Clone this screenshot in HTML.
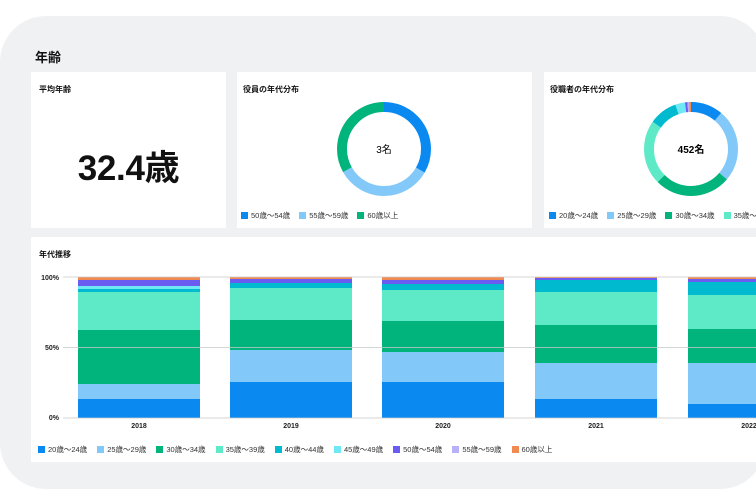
<!DOCTYPE html>
<html><head><meta charset="utf-8"><style>
*{margin:0;padding:0;box-sizing:border-box}
body{width:756px;height:504px;overflow:hidden;background:#fff;font-family:"Liberation Sans","Noto Sans CJK JP",sans-serif;color:#111;position:relative}
.panel{position:absolute;left:0;top:16px;width:766px;height:473px;background:#f0f1f3;border-radius:46px}
.card{position:absolute;background:#fff}
.t{position:absolute;font-size:8px;font-weight:bold}
.lg{position:absolute;font-size:7.5px;color:#333;white-space:nowrap;display:flex;gap:9px;align-items:center}
.lg span{display:flex;align-items:center}
.lg i{display:inline-block;width:7px;height:7px;margin-right:3px}
</style></head><body>
<div class="panel"></div>
<div style="position:absolute;left:35px;top:47px;font-size:13px;font-weight:bold">年齢</div>

<div class="card" style="left:31px;top:72px;width:195px;height:156px">
<div class="t" style="left:8px;top:12px">平均年齢</div>
<div style="position:absolute;left:0;width:195px;top:68px;text-align:center;font-size:35px;font-weight:bold;letter-spacing:-0.3px">32.4歳</div>
</div>

<div class="card" style="left:237px;top:72px;width:295px;height:156px">
<div class="t" style="left:6px;top:12px">役員の年代分布</div>
<svg style="position:absolute;left:0;top:0" width="295" height="156">
<g transform="rotate(-90 147 77)" fill="none" stroke-width="10">
<circle cx="147" cy="77" r="42" stroke="#0a8af0" stroke-dasharray="88 300"/>
<circle cx="147" cy="77" r="42" stroke="#82c8f8" stroke-dasharray="88 300" stroke-dashoffset="-88"/>
<circle cx="147" cy="77" r="42" stroke="#00b47c" stroke-dasharray="88 300" stroke-dashoffset="-176"/>
</g>
<text x="147" y="81" text-anchor="middle" font-size="10" font-family="Liberation Sans,Noto Sans CJK JP,sans-serif">3名</text>
</svg>
<div class="lg" style="left:4px;top:138px"><span><i style="background:#0a8af0"></i>50歳〜54歳</span><span><i style="background:#82c8f8"></i>55歳〜59歳</span><span><i style="background:#00b47c"></i>60歳以上</span></div>
</div>

<div class="card" style="left:544px;top:72px;width:220px;height:156px">
<div class="t" style="left:6px;top:12px">役職者の年代分布</div>
<svg style="position:absolute;left:0;top:0" width="220" height="156">
<g transform="rotate(-90 147 77)" fill="none" stroke-width="10">
<circle cx="147" cy="77" r="42" stroke="#0a8af0" stroke-dasharray="29.3 300"/>
<circle cx="147" cy="77" r="42" stroke="#82c8f8" stroke-dasharray="66 300" stroke-dashoffset="-29.3"/>
<circle cx="147" cy="77" r="42" stroke="#00b47c" stroke-dasharray="69.6 300" stroke-dashoffset="-95.3"/>
<circle cx="147" cy="77" r="42" stroke="#5eeac6" stroke-dasharray="58.6 300" stroke-dashoffset="-164.9"/>
<circle cx="147" cy="77" r="42" stroke="#00bad0" stroke-dasharray="25.7 300" stroke-dashoffset="-223.5"/>
<circle cx="147" cy="77" r="42" stroke="#6ee8f4" stroke-dasharray="8.8 300" stroke-dashoffset="-249.2"/>
<circle cx="147" cy="77" r="42" stroke="#6a5cf0" stroke-dasharray="2.2 300" stroke-dashoffset="-258"/>
<circle cx="147" cy="77" r="42" stroke="#b8b0f8" stroke-dasharray="1.5 300" stroke-dashoffset="-260.2"/>
<circle cx="147" cy="77" r="42" stroke="#f08a50" stroke-dasharray="2.2 300" stroke-dashoffset="-261.7"/>
</g>
<text x="147" y="81" text-anchor="middle" font-size="10" font-weight="bold" font-family="Liberation Sans,Noto Sans CJK JP,sans-serif">452名</text>
</svg>
<div class="lg" style="left:5px;top:138px"><span><i style="background:#0a8af0"></i>20歳〜24歳</span><span><i style="background:#82c8f8"></i>25歳〜29歳</span><span><i style="background:#00b47c"></i>30歳〜34歳</span><span><i style="background:#5eeac6"></i>35歳〜39歳</span></div>
</div>

<div class="card" style="left:31px;top:237px;width:740px;height:225px">
<div class="t" style="left:8px;top:12px">年代推移</div>
</div>
<svg style="position:absolute;left:0;top:0" width="756" height="504" font-family="Liberation Sans,Noto Sans CJK JP,sans-serif">
<g font-size="7" font-weight="bold" text-anchor="end" fill="#222">
<text x="59" y="280">100%</text><text x="59" y="350">50%</text><text x="59" y="420">0%</text>
</g>
<g>
<rect x="78" y="399" width="122" height="19" fill="#0a8af0"/>
<rect x="78" y="384" width="122" height="15" fill="#82c8f8"/>
<rect x="78" y="330" width="122" height="54" fill="#00b47c"/>
<rect x="78" y="292" width="122" height="38" fill="#5eeac6"/>
<rect x="78" y="289" width="122" height="3" fill="#00bad0"/>
<rect x="78" y="286" width="122" height="3" fill="#6ee8f4"/>
<rect x="78" y="280" width="122" height="6" fill="#6a5cf0"/>
<rect x="78" y="277" width="122" height="3" fill="#f08a50"/>
<rect x="230" y="382" width="122" height="36" fill="#0a8af0"/>
<rect x="230" y="350" width="122" height="32" fill="#82c8f8"/>
<rect x="230" y="320" width="122" height="30" fill="#00b47c"/>
<rect x="230" y="288" width="122" height="32" fill="#5eeac6"/>
<rect x="230" y="283" width="122" height="5" fill="#00bad0"/>
<rect x="230" y="279" width="122" height="4" fill="#6a5cf0"/>
<rect x="230" y="277" width="122" height="2" fill="#f08a50"/>
<rect x="382" y="382" width="122" height="36" fill="#0a8af0"/>
<rect x="382" y="352" width="122" height="30" fill="#82c8f8"/>
<rect x="382" y="321" width="122" height="31" fill="#00b47c"/>
<rect x="382" y="290" width="122" height="31" fill="#5eeac6"/>
<rect x="382" y="284" width="122" height="6" fill="#00bad0"/>
<rect x="382" y="280" width="122" height="4" fill="#6a5cf0"/>
<rect x="382" y="277" width="122" height="3" fill="#f08a50"/>
<rect x="535" y="399" width="122" height="19" fill="#0a8af0"/>
<rect x="535" y="363" width="122" height="36" fill="#82c8f8"/>
<rect x="535" y="325" width="122" height="38" fill="#00b47c"/>
<rect x="535" y="292" width="122" height="33" fill="#5eeac6"/>
<rect x="535" y="280" width="122" height="12" fill="#00bad0"/>
<rect x="535" y="278" width="122" height="2" fill="#6a5cf0"/>
<rect x="535" y="277" width="122" height="1" fill="#f08a50"/>
<rect x="688" y="404" width="122" height="14" fill="#0a8af0"/>
<rect x="688" y="363" width="122" height="41" fill="#82c8f8"/>
<rect x="688" y="329" width="122" height="34" fill="#00b47c"/>
<rect x="688" y="295" width="122" height="34" fill="#5eeac6"/>
<rect x="688" y="282" width="122" height="13" fill="#00bad0"/>
<rect x="688" y="279" width="122" height="3" fill="#6a5cf0"/>
<rect x="688" y="277" width="122" height="2" fill="#f08a50"/>
</g>
<g stroke="#c8c8c8" stroke-width="0.8">
<line x1="63" y1="277" x2="756" y2="277"/><line x1="63" y1="347.5" x2="756" y2="347.5"/><line x1="63" y1="418" x2="756" y2="418"/>
</g>
<g font-size="7" font-weight="bold" text-anchor="middle" fill="#222">
<text x="139" y="428">2018</text><text x="291" y="428">2019</text><text x="443" y="428">2020</text><text x="596" y="428">2021</text><text x="749" y="428">2022</text>
</g>
</svg>
<div class="lg" style="left:38px;top:444px;gap:10px"><span><i style="background:#0a8af0"></i>20歳〜24歳</span><span><i style="background:#82c8f8"></i>25歳〜29歳</span><span><i style="background:#00b47c"></i>30歳〜34歳</span><span><i style="background:#5eeac6"></i>35歳〜39歳</span><span><i style="background:#00bad0"></i>40歳〜44歳</span><span><i style="background:#6ee8f4"></i>45歳〜49歳</span><span><i style="background:#6a5cf0"></i>50歳〜54歳</span><span><i style="background:#b8b0f8"></i>55歳〜59歳</span><span><i style="background:#f08a50"></i>60歳以上</span></div>
</body></html>
